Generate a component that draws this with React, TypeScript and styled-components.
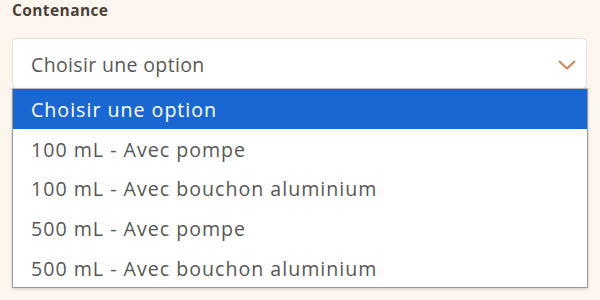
import styled, { createGlobalStyle } from 'styled-components';

const options = [
  'Choisir une option',
  '100 mL - Avec pompe',
  '100 mL - Avec bouchon aluminium',
  '500 mL - Avec pompe',
  '500 mL - Avec bouchon aluminium',
];

function App() {
  return (
    <>
      <GlobalStyle />
      <Page>
        <Label>Contenance</Label>
        <Field>
          <SelectBox>
            <span>Choisir une option</span>
            <Chevron viewBox="0 0 18 10" width="18" height="10">
              <path d="M1.5 1.5 L9 8.5 L16.5 1.5" fill="none" stroke="#c8875a" strokeWidth="2" strokeLinecap="round" strokeLinejoin="round" />
            </Chevron>
          </SelectBox>
          <Menu>
            {options.map((o, i) => (
              <Option key={o} $active={i === 0}>
                {o}
              </Option>
            ))}
          </Menu>
        </Field>
      </Page>
    </>
  );
}

export default App;

const GlobalStyle = createGlobalStyle`
  html, body {
    margin: 0;
    padding: 0;
    background: #fdf6ee;
  }
  body {
    font-family: 'Open Sans', 'Noto Sans', sans-serif;
  }
`;

const Page = styled.div`
  width: 600px;
  height: 300px;
  padding: 0 13px 0 12px;
  box-sizing: border-box;
  overflow: hidden;
`;

const Label = styled.div`
  font-size: 15.5px;
  font-weight: 700;
  letter-spacing: 0.4px;
  color: #4a4038;
  line-height: 20px;
  margin-bottom: 18px;
`;

const Field = styled.div`
  position: relative;
`;

const SelectBox = styled.div`
  height: 51px;
  box-sizing: border-box;
  background: #fff;
  border: 1px solid #e6e1dc;
  border-radius: 4px;
  display: flex;
  align-items: center;
  justify-content: space-between;
  padding: 1px 10px 0 18px;
  font-size: 19.5px;
  letter-spacing: 0.35px;
  color: #575757;
`;

const Chevron = styled.svg`
  margin-top: 2px;
`;

const Menu = styled.div`
  position: absolute;
  top: 50px;
  left: 0;
  right: -1px;
  background: #fff;
  border: 1px solid #9a9a9a;
  border-top: 1px solid #b8b8c0;
  box-shadow: 0 1px 3px rgba(0, 0, 0, 0.2);
  display: flex;
  flex-direction: column;
`;

const Option = styled.div<{ $active: boolean }>`
  height: 39.6px;
  box-sizing: border-box;
  padding: 2px 0 0 18px;
  display: flex;
  align-items: center;
  font-size: 19.6px;
  letter-spacing: 1px;
  color: ${(p) => (p.$active ? '#fff' : '#575757')};
  background: ${(p) => (p.$active ? '#1a67d2' : 'transparent')};
`;
